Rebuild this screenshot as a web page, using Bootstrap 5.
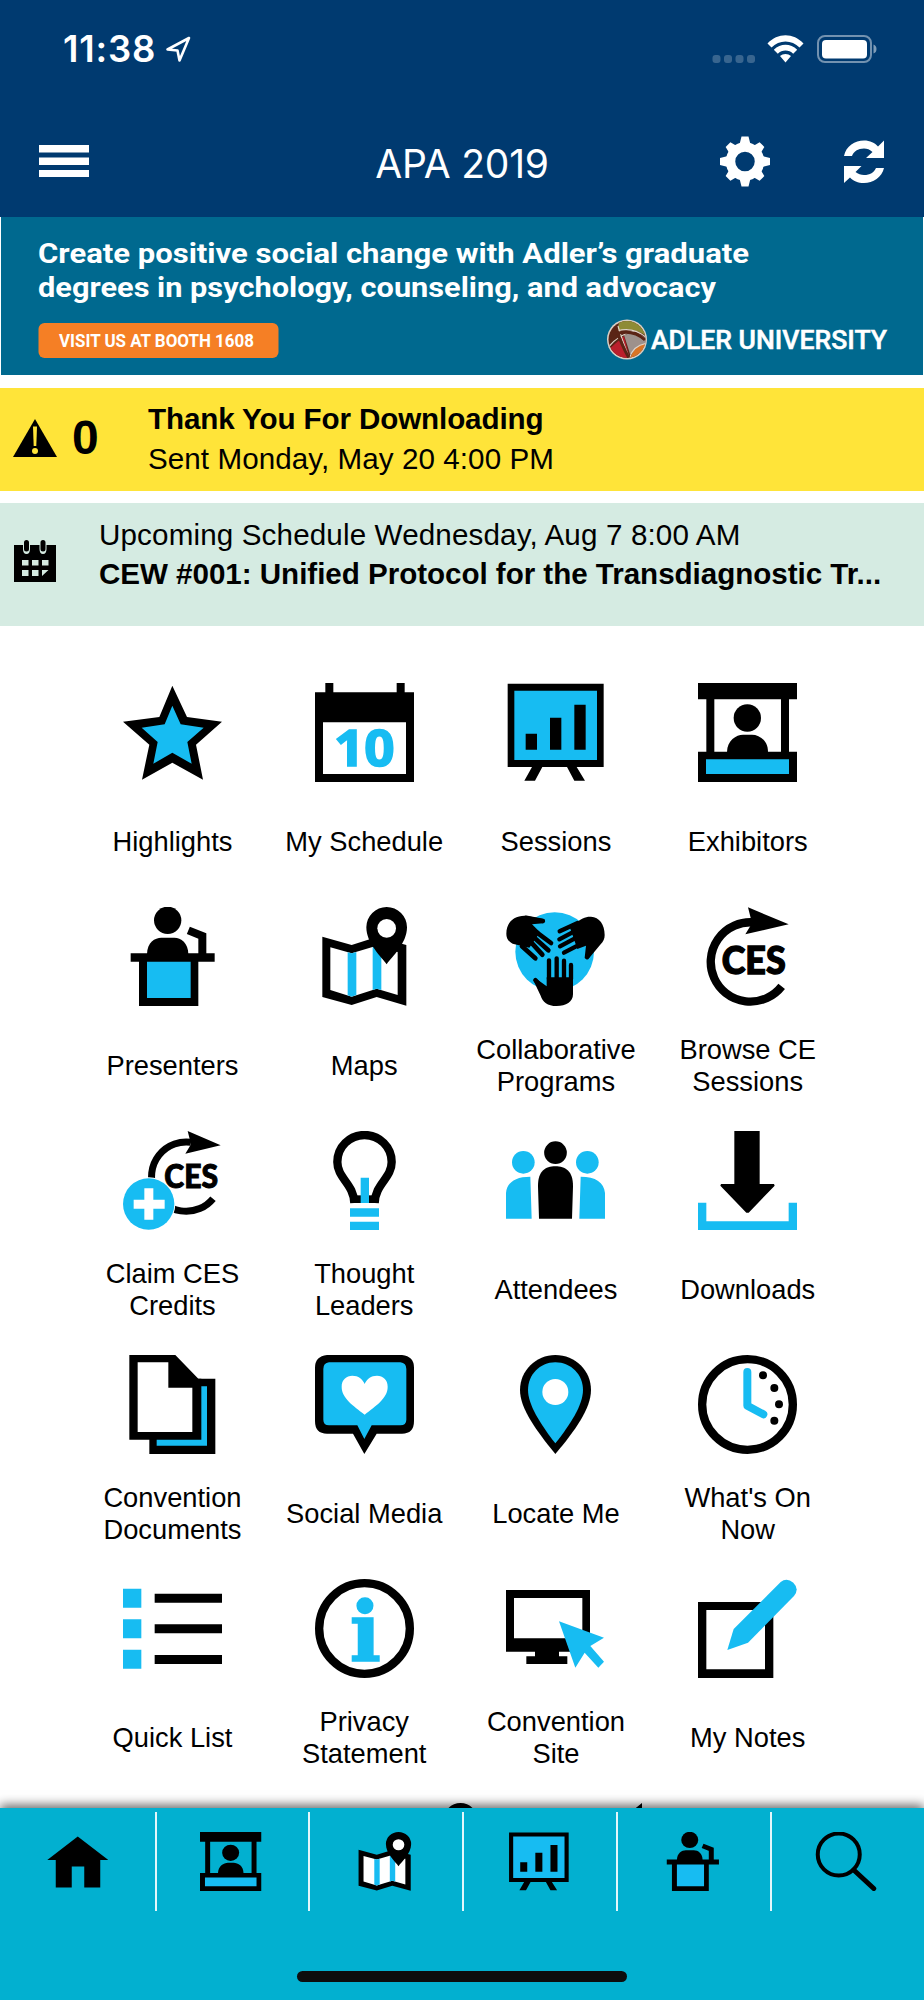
<!DOCTYPE html>
<html lang="en">
<head>
  <meta charset="UTF-8" />
  <meta name="viewport" content="width=device-width, initial-scale=1.0" />
  <title>APA 2019</title>
  <link href="https://cdn.jsdelivr.net/npm/bootstrap@5.3.2/dist/css/bootstrap.min.css" rel="stylesheet" />
  <style>
    body {
      font-family: "Liberation Sans", Arial, sans-serif;
      color: #000;
      background: #fff;
    }

    .app-screen {
      width: 924px;
      height: 2000px;
    }

    /* Status bar and title bar */
    .app-header {
      height: 217px;
      background: #003a70;
      color: #fff;
      font-family: Inter, sans-serif;
    }

    .status-bar {
      height: 98px;
      padding: 0 47px 0 63px;
    }

    .status-time {
      font-size: 36.5px;
      font-weight: 600;
      letter-spacing: 0.8px;
      line-height: 40px;
    }

    .title-bar {
      height: 119px;
      display: grid;
      grid-template-columns: 1fr auto 1fr;
      padding: 0 39px 0 39px;
    }

    .menu-icon {
      margin-top: 47px;
    }

    .title-text {
      margin-top: 42px;
      font-size: 39px;
      font-weight: 400;
      line-height: 48px;
      letter-spacing: -0.2px;
    }

    .title-actions {
      gap: 73px;
    }

    .ad-banner {
      height: 158px;
      margin: 0 1px;
      background: #00698f;
    }

    /* Notice strips */
    .notice {
      font-size: 29.6px;
      line-height: 39.5px;
    }

    .notice-alert {
      height: 103px;
      margin-top: 12.7px;
      padding: 11.5px 13px 0;
      background: #ffe439;
    }

    .notice-alert .fw-bold {
      letter-spacing: -0.12px;
    }

    .notice-alert .alert-info-side {
      width: 135px;
      height: 78px;
    }

    .alert-count {
      margin-left: 15px;
      font-size: 48px;
      font-weight: 700;
      line-height: 48px;
    }

    .sent-line {
      letter-spacing: 0.07px;
    }

    .notice-next {
      height: 123px;
      margin-top: 12.6px;
      padding: 11.5px 14px 0;
      background: #d5ebe2;
    }

    .notice-next .next-time {
      letter-spacing: 0.14px;
    }

    .notice-next .fw-bold {
      letter-spacing: -0.04px;
    }

    .notice-next svg {
      margin-top: 25px;
      margin-right: 43px;
    }

    /* Icon grid */
    .tile-area {
      height: 1181.4px;
      padding: 56.6px 80.4px 0 76.6px;
    }

    .tile {
      width: 25%;
      height: 224.1px;
    }

    .tile svg {
      width: 99px;
      height: 99px;
    }

    .tile-label {
      height: 64px;
      margin-top: 28.2px;
      padding: 0 8px;
      font-size: 27.3px;
      line-height: 32px;
    }

    /* Bottom tabs */
    .tab-area {
      height: 192.3px;
      background: #02b0d0;
      box-shadow: 0 -3px 10px rgba(0, 0, 0, 0.6);
    }

    .tab-row {
      height: 103px;
      padding-top: 4px;
      display: grid;
      grid-template-columns: 156.5px repeat(4, 153.9px) 1fr;
    }

    .tab-link {
      padding-top: 20px;
      padding-right: 3px;
      border-right: 2px solid #e3f7fb;
    }

    .tab-link:first-child {
      padding-right: 0;
    }

    .tab-link:last-child {
      padding-right: 4px;
      border-right: 0;
    }

    .tab-link svg {
      width: 61.500px;
      height: 59px;
    }

    .home-bar {
      width: 330px;
      height: 11px;
      margin-top: 60px;
      border-radius: 6px;
      background: #0d0d0d;
    }
  </style>
</head>
<body>
  <!-- Icon shapes, shared by the grid and the tabs -->
  <svg class="d-none">
    <symbol id="star" viewBox="0 0 297 297">
      <path d="M148 8 192 102 297 116 219 185 240 290 148 239 57 290 79 185 0 116 109 102Z" />
      <path d="M148 68 173 124 242 134 193 177 206 242 148 209 91 242 104 177 56 134 125 124Z" fill="#17bcf2" />
    </symbol>
    <symbol id="calendar" viewBox="0 0 297 297">
      <path d="M31 0H55V28H245V0H269V28H297V297H0V28H31Z" />
      <path d="M24 118H273V273H24Z" fill="#fff" />
      <text x="57" y="249" font-family="Noto Sans, sans-serif" font-weight="700" font-size="148" fill="#17bcf2" stroke="#17bcf2" stroke-width="5" textLength="182" lengthAdjust="spacingAndGlyphs">10</text>
    </symbol>
    <symbol id="sessions" viewBox="0 0 297 297" preserveAspectRatio="none">
      <path d="M5 2H293V252H212L237 293H205L183 252H109L87 293H55L78 252H5Z" />
      <path d="M25 23H273V231H25Z" fill="#17bcf2" />
      <path d="M59 152H93V200H59ZM132 104H166V200H132ZM205 65H239V200H205Z" />
    </symbol>
    <symbol id="exhibitors" viewBox="0 0 297 297" preserveAspectRatio="none">
      <path d="M0 0H297V49H273V206H297V297H0V206H25V49H0ZM49 49V206H249V49Z" fill-rule="evenodd" />
      <path d="M24 229H273V273H24Z" fill="#17bcf2" />
      <circle cx="148" cy="105" r="41" />
      <path d="M87 207C87 172 115 155 135 155H162C184 155 210 172 210 207Z" />
    </symbol>
    <symbol id="presenter" viewBox="0 0 297 297" preserveAspectRatio="none">
      <circle cx="134" cy="40" r="41" />
      <path d="M72 142C72 106 96 92 115 92H154C174 92 196 108 196 142Z" />
      <path d="M23 139H275V164H226V297H48V164H23Z" />
      <path d="M72 164H203V273H72Z" fill="#17bcf2" />
      <path d="M196 70 238 87V142" fill="none" stroke="#000" stroke-width="24" />
    </symbol>
    <symbol id="map" viewBox="0 0 297 297" preserveAspectRatio="none">
      <path d="M22 89 110 114 185 90 274 114V296L185 270 110 294 22 270Z" />
      <path d="M46 121 110 139 185 116 248 135V264L185 245 110 269 46 249Z" fill="#fff" />
      <path d="M98 136 110 139 124 135V264L110 269 98 265ZM173 120 185 116 199 120V249L185 245 173 249Z" fill="#17bcf2" />
      <path d="M215 172C200 150 154 110 154 61A61 61 0 0 1 276 61C276 110 230 150 215 172Z" />
      <circle cx="215" cy="64" r="28" fill="#fff" />
    </symbol>
    <symbol id="hands" viewBox="0 0 297 297">
      <circle cx="146" cy="134" r="118" fill="#17bcf2" />
      <path d="M122 211H201V262C201 285 180 297 152 297C124 297 110 284 104 266L82 220 95 218 122 238ZM1 80C1 46 24 25 58 26L112 36V49L78 52 102 76 70 122 20 110C5 102 1 92 1 80ZM296 84C296 52 280 30 255 29C238 28 226 36 205 50L192 62 214 126 240 116 236 152 249 154 284 112C292 104 296 95 296 84Z" />
      <g fill="none" stroke="#000" stroke-width="13" stroke-linecap="round">
        <path d="M129 216V160M152 216V154M174 216V161M195 216V174M88 219 112 246M60 32 111 42" />
        <path d="M92 76 135 108M80 88 127 130M68 98 109 143M48 118 88 154" stroke-width="14" />
        <path d="M161 73 215 48M160 97 215 68M162 118 218 88M174 137 222 112M243 151 255 122" />
      </g>
    </symbol>
    <symbol id="ces" viewBox="0 0 297 297">
      <path d="M165 46A119 119 0 1 0 251 238" fill="none" stroke="#000" stroke-width="25" />
      <path d="M150 1 272 52 142 82 162 49Z" />
      <text x="71" y="202" font-family="Lato" font-weight="900" font-size="113" textLength="192" lengthAdjust="spacingAndGlyphs" stroke="#000" stroke-width="4">CES</text>
    </symbol>
    <symbol id="claim" viewBox="0 0 297 297">
      <path d="M204 34A104 104 0 1 0 270 203" fill="none" stroke="#000" stroke-width="21" />
      <path d="M194 0 293 43 187 68 204 40Z" />
      <text x="124" y="171" font-family="Lato" font-weight="900" font-size="95" textLength="161" lengthAdjust="spacingAndGlyphs" stroke="#000" stroke-width="3">CES</text>
      <circle cx="77" cy="219" r="80" fill="#fff" />
      <circle cx="77" cy="219" r="77" fill="#17bcf2" />
      <path d="M64 172H91V206H125V233H91V266H64V233H32V206H64Z" fill="#fff" />
    </symbol>
    <symbol id="bulb" viewBox="0 0 297 297">
      <path d="M118 216C116 158 67 142 67 93A81.5 81 0 0 1 230 93C230 142 181 158 179 216" fill="none" stroke="#000" stroke-width="25" />
      <path d="M115 193H182V216H115Z" />
      <path d="M137 140H162V216H137ZM105 232H192V257H105ZM105 272H192V297H105Z" fill="#17bcf2" />
    </symbol>
    <symbol id="attendees" viewBox="0 0 297 297">
      <circle cx="148.500" cy="65" r="34" />
      <path d="M99 263 96 165C96 120 118 106 148 106S201 120 201 165L198 263Z" />
      <g fill="#17bcf2">
        <circle cx="52" cy="94" r="34" />
        <circle cx="244" cy="94" r="34" />
        <path d="M0 263V186C3 154 28 137 73 137L77 263ZM297 263V186C294 154 269 137 224 137L220 263Z" />
      </g>
    </symbol>
    <symbol id="download" viewBox="0 0 297 297">
      <path d="M109 0H185V159H228L230 164 152 245H145L67 164 69 159H109Z" />
      <path d="M0 215H25V271H272V215H297V297H0Z" fill="#17bcf2" />
    </symbol>
    <symbol id="docs" viewBox="0 0 297 297">
      <path d="M79 71H277V297H79Z" />
      <path d="M101 94H252V272H101Z" fill="#17bcf2" />
      <path d="M19 0H157L226 71H235V254H19Z" />
      <path d="M44 22H136V98H208V231H44Z" fill="#fff" />
    </symbol>
    <symbol id="social" viewBox="0 0 297 297">
      <path d="M36 0H261Q297 4 297 38V198Q297 236 261 236H185L148 297 114 236H36Q0 236 0 198V38Q0 4 36 0Z" />
      <path d="M42 22H256Q274 24 274 42V194Q274 211 256 211H170L148 252 127 211H42Q25 211 25 194V42Q25 24 42 22Z" fill="#17bcf2" />
      <path d="M149 179C115 152 80 130 80 95C80 74 94 62 112 62C130 62 143 72 149 87C155 72 168 62 186 62C204 62 218 74 218 95C218 130 183 152 149 179Z" fill="#fff" />
    </symbol>
    <symbol id="locate" viewBox="0 0 297 297">
      <path d="M148 0C208 0 255 47 255 105C255 160 208 226 148 297C90 226 42 160 42 105C42 47 90 0 148 0Z" />
      <path d="M148 22C196 22 231 60 231 105C231 150 192 210 148 265C105 210 66 150 66 105C66 60 101 22 148 22Z" fill="#17bcf2" />
      <circle cx="148" cy="111" r="39" fill="#fff" />
    </symbol>
    <symbol id="clock" viewBox="0 0 297 297">
      <circle cx="148.500" cy="148.500" r="136" fill="none" stroke="#000" stroke-width="25" />
      <path d="M148 51V152L196 178" fill="none" stroke="#17bcf2" stroke-width="24" stroke-linecap="round" stroke-linejoin="round" />
      <circle cx="195" cy="61" r="12" /><circle cx="229" cy="99" r="12" />
      <circle cx="243" cy="148" r="12" /><circle cx="229" cy="197" r="12" />
    </symbol>
    <symbol id="list" viewBox="0 0 297 297">
      <path d="M0 29H55V86H0ZM0 121H55V178H0ZM0 212H55V269H0Z" fill="#17bcf2" />
      <path d="M95 44H297V71H95ZM95 136H297V163H95ZM95 228H297V255H95Z" />
    </symbol>
    <symbol id="info" viewBox="0 0 297 297">
      <circle cx="148.500" cy="148.500" r="136" fill="none" stroke="#000" stroke-width="25" />
      <text x="151" y="245" text-anchor="middle" font-family="DejaVu Serif" font-weight="700" font-size="246" fill="#17bcf2" stroke="#17bcf2" stroke-width="5">i</text>
    </symbol>
    <symbol id="site" viewBox="0 0 297 297">
      <path d="M0 33H252V218H159V232H184V255H61V232H87V218H0Z" />
      <path d="M24 57H229V178H24Z" fill="#fff" />
      <path d="M159 127 294 176 253 201 294 248 277 266 236 221 208 266Z" fill="#17bcf2" />
    </symbol>
    <symbol id="notes" viewBox="0 0 297 297">
      <path d="M0 69H226V297H0ZM25 93V271H201V93Z" fill-rule="evenodd" />
      <path d="M88 213 107 150 248 9Q266-6 286 11 305 30 288 51L150 191Z" fill="#17bcf2" />
    </symbol>
  </svg>

  <div class="app-screen d-flex flex-column overflow-hidden">
    <header class="app-header">
      <div class="status-bar d-flex align-items-center justify-content-between">
        <div class="d-flex align-items-center gap-2">
          <span class="status-time">11:38</span>
          <svg width="28" height="28" viewBox="0 0 28 28" fill="none" stroke="#fff" stroke-width="2.600" stroke-linejoin="round">
            <path d="M25 3 3.500 14.500 13.500 15.500 15.500 25.500Z" />
          </svg>
        </div>
        <svg width="165" height="30" viewBox="0 0 165 30" fill="#fff" overflow="visible">
          <g opacity="0.220">
            <rect x="0.500" y="21" width="8" height="8" rx="3" />
            <rect x="12" y="21" width="8" height="8" rx="3" />
            <rect x="23.500" y="21" width="8" height="8" rx="3" />
            <rect x="35" y="21" width="8" height="8" rx="3" />
          </g>
          <path d="M55.500 9.500C65.500-1.500 81.500-1.500 91.500 9.500L87.500 13.500C80 5.500 67 5.500 59.500 13.500ZM61.800 15.800C68.500 9 78.500 9 85.200 15.800L81.200 19.800C77 15.500 70 15.500 65.800 19.800ZM68 22C71 19.300 76 19.300 79 22L73.500 28.500Z" />
          <rect x="106" y="2" width="53" height="26" rx="7" fill="none" stroke="#fff" stroke-width="2" opacity="0.450" />
          <rect x="110" y="6" width="45" height="18.500" rx="4" />
          <path d="M161.500 10.500Q164.500 11.500 164.500 15T161.500 19.500Z" opacity="0.500" />
        </svg>
      </div>
      <nav class="title-bar">
        <svg class="menu-icon" width="50" height="34" viewBox="0 0 50 34" fill="#fff">
          <path d="M0 0H50V7.500H0ZM0 12.500H50V20H0ZM0 25H50V32H0Z" />
        </svg>
        <span class="title-text">APA 2019</span>
        <div class="title-actions d-flex justify-content-end">
          <svg class="mt-4" width="50" height="80" viewBox="-25 -40 50 80" fill="#fff">
            <g transform="translate(0 -0.500)">
              <circle r="14.500" fill="none" stroke="#fff" stroke-width="9.500" />
              <g id="teeth">
                <path d="M-5.500-17-3.500-25H3.500L5.500-17ZM-5.500 17-3.500 25H3.500L5.500 17Z" />
                <path d="M-17-5.500-25-3.500V3.500L-17 5.500ZM17-5.500 25-3.500V3.500L17 5.500Z" />
              </g>
              <use href="#teeth" transform="rotate(45) scale(0.960)" />
            </g>
          </svg>
          <svg class="mt-4" width="42" height="80" viewBox="0 0 42 80" fill="#fff">
            <path d="M1 34C3 24 12 18.500 21 18.500C27 18.500 32 21 35 24.500L41 18.500V36H23L29.500 30C27 27.500 24 26.500 21 26.500C15 26.500 10.500 29.500 9 34Z" />
            <path d="M41 46C39 55 30 61 21 61C15 61 10 59 7 55.500L1 61V44H18.500L12.500 50C15 52 18 53 21 53C27 53 31 50.500 33 46Z" />
          </svg>
        </div>
      </nav>
    </header>

    <section class="ad-banner">
      <svg class="d-block" width="922" height="158" viewBox="1 217 922 158" fill="#fff" font-family="Roboto, sans-serif">
        <g font-size="28.500" font-weight="700">
          <text x="38" y="262.500" textLength="711" lengthAdjust="spacingAndGlyphs">Create positive social change with Adler’s graduate</text>
          <text x="38" y="297" textLength="678" lengthAdjust="spacingAndGlyphs">degrees in psychology, counseling, and advocacy</text>
        </g>
        <rect x="38.500" y="323" width="240" height="35" rx="6" fill="#f57f25" />
        <text x="59" y="346.500" font-size="18.200" font-weight="700" textLength="195" lengthAdjust="spacingAndGlyphs">VISIT US AT BOOTH 1608</text>
        <clipPath id="globe"><circle cx="627" cy="339.500" r="18.500" /></clipPath>
        <circle cx="627" cy="339.500" r="20" fill="#d9cfc4" />
        <g clip-path="url(#globe)">
          <path d="M607 319H648V360H607Z" fill="#5a2416" />
          <path d="M620 319H648V337Q634 326 617 331Z" fill="#8e8b35" />
          <path d="M608 350 624 336 630 360H612Z" fill="#bb1f2c" />
          <path d="M624 335Q636 330 648 340V352L630 354Z" fill="#9d918c" />
          <path d="M648 343Q634 344 629 361H648Z" fill="#d97526" />
          <path d="M606 350Q617 335 634 331M618 326Q622 340 630 360M629 360Q632 345 648 343M617 331Q634 326 648 339" fill="none" stroke="#ddd3c8" stroke-width="1.200" />
          <path d="M619 333Q634 330 645 340M616 328Q622 346 629 358" fill="none" stroke="#5a2416" stroke-width="3" />
        </g>
        <text x="651" y="348.500" font-size="26" font-weight="500" stroke="#fff" stroke-width="0.500" textLength="236" lengthAdjust="spacingAndGlyphs">ADLER UNIVERSITY</text>
      </svg>
    </section>

    <section class="notice notice-alert d-flex">
      <div class="alert-info-side d-flex align-items-center">
        <svg width="44" height="38" viewBox="0 0 44 38">
          <path d="M22 0 44 38H0Z" />
          <path d="M20 7.500H24L23.300 27H20.700Z" fill="#ffe439" />
          <circle cx="22" cy="32" r="3" fill="#ffe439" />
        </svg>
        <span class="alert-count">0</span>
      </div>
      <div>
        <div class="fw-bold">Thank You For Downloading</div>
        <div class="sent-line">Sent Monday, May 20 4:00 PM</div>
      </div>
    </section>

    <section class="notice notice-next d-flex text-nowrap">
      <svg width="42" height="43" viewBox="0 0 42 43">
        <path d="M0 5H42V42H0Z" />
        <path d="M9 3V9Q9 14 12.500 14T16 9V3ZM25.500 3V9Q25.500 14 29 14T32.500 9V3Z" fill="#d5ebe2" />
        <path d="M12.500 2.500V9M29 2.500V9" stroke="#000" stroke-width="5" stroke-linecap="round" />
        <path d="M8 20H14.500V25.500H8ZM18 20H24.500V25.500H18ZM28 20H34.500V25.500H28ZM8 30H14.500V36H8ZM18 30H24.500V36H18ZM28 30H34.500L28 36Z" fill="#d5ebe2" />
      </svg>
      <div>
        <div class="next-time">Upcoming Schedule Wednesday, Aug 7 8:00 AM</div>
        <div class="fw-bold">CEW #001: Unified Protocol for the Transdiagnostic Tr...</div>
      </div>
    </section>

    <main class="tile-area d-flex flex-wrap justify-content-center align-content-start overflow-hidden flex-shrink-0">
      <div class="tile d-flex flex-column align-items-center">
        <svg><use href="#star" /></svg>
        <div class="tile-label d-flex align-items-center text-center">Highlights</div>
      </div>
      <div class="tile d-flex flex-column align-items-center">
        <svg><use href="#calendar" /></svg>
        <div class="tile-label d-flex align-items-center text-center">My Schedule</div>
      </div>
      <div class="tile d-flex flex-column align-items-center">
        <svg><use href="#sessions" /></svg>
        <div class="tile-label d-flex align-items-center text-center">Sessions</div>
      </div>
      <div class="tile d-flex flex-column align-items-center">
        <svg><use href="#exhibitors" /></svg>
        <div class="tile-label d-flex align-items-center text-center">Exhibitors</div>
      </div>

      <div class="tile d-flex flex-column align-items-center">
        <svg><use href="#presenter" /></svg>
        <div class="tile-label d-flex align-items-center text-center">Presenters</div>
      </div>
      <div class="tile d-flex flex-column align-items-center">
        <svg><use href="#map" /></svg>
        <div class="tile-label d-flex align-items-center text-center">Maps</div>
      </div>
      <div class="tile d-flex flex-column align-items-center">
        <svg><use href="#hands" /></svg>
        <div class="tile-label d-flex align-items-center text-center">Collaborative<br />Programs</div>
      </div>
      <div class="tile d-flex flex-column align-items-center">
        <svg><use href="#ces" /></svg>
        <div class="tile-label d-flex align-items-center text-center">Browse CE<br />Sessions</div>
      </div>

      <div class="tile d-flex flex-column align-items-center">
        <svg><use href="#claim" /></svg>
        <div class="tile-label d-flex align-items-center text-center">Claim CES<br />Credits</div>
      </div>
      <div class="tile d-flex flex-column align-items-center">
        <svg><use href="#bulb" /></svg>
        <div class="tile-label d-flex align-items-center text-center">Thought<br />Leaders</div>
      </div>
      <div class="tile d-flex flex-column align-items-center">
        <svg><use href="#attendees" /></svg>
        <div class="tile-label d-flex align-items-center text-center">Attendees</div>
      </div>
      <div class="tile d-flex flex-column align-items-center">
        <svg><use href="#download" /></svg>
        <div class="tile-label d-flex align-items-center text-center">Downloads</div>
      </div>

      <div class="tile d-flex flex-column align-items-center">
        <svg><use href="#docs" /></svg>
        <div class="tile-label d-flex align-items-center text-center">Convention<br />Documents</div>
      </div>
      <div class="tile d-flex flex-column align-items-center">
        <svg><use href="#social" /></svg>
        <div class="tile-label d-flex align-items-center text-center">Social Media</div>
      </div>
      <div class="tile d-flex flex-column align-items-center">
        <svg><use href="#locate" /></svg>
        <div class="tile-label d-flex align-items-center text-center">Locate Me</div>
      </div>
      <div class="tile d-flex flex-column align-items-center">
        <svg><use href="#clock" /></svg>
        <div class="tile-label d-flex align-items-center text-center">What's On<br />Now</div>
      </div>

      <div class="tile d-flex flex-column align-items-center">
        <svg><use href="#list" /></svg>
        <div class="tile-label d-flex align-items-center text-center">Quick List</div>
      </div>
      <div class="tile d-flex flex-column align-items-center">
        <svg><use href="#info" /></svg>
        <div class="tile-label d-flex align-items-center text-center">Privacy<br />Statement</div>
      </div>
      <div class="tile d-flex flex-column align-items-center">
        <svg><use href="#site" /></svg>
        <div class="tile-label d-flex align-items-center text-center">Convention<br />Site</div>
      </div>
      <div class="tile d-flex flex-column align-items-center">
        <svg><use href="#notes" /></svg>
        <div class="tile-label d-flex align-items-center text-center">My Notes</div>
      </div>

      <!-- Last row, mostly under the tabs -->
      <div class="tile"></div>
      <div class="tile d-flex flex-column align-items-center">
        <svg viewBox="0 0 99 99"><circle cx="49.500" cy="17" r="17" /></svg>
      </div>
      <div class="tile d-flex flex-column align-items-center">
        <svg viewBox="0 0 99 99"><path d="M40 0 30 8H24V99H48V8H40Z" /></svg>
      </div>
    </main>

    <footer class="tab-area flex-shrink-0">
      <nav class="tab-row">
        <a class="tab-link text-center" href="#">
          <svg viewBox="0 0 61 59"><path d="M30.500 4.500 61 28H53V55.500H37V34.500H24.500V55.500H8.500V28H0Z" /></svg>
        </a>
        <a class="tab-link text-center" href="#"><svg><use href="#exhibitors" /></svg></a>
        <a class="tab-link text-center" href="#"><svg><use href="#map" /></svg></a>
        <a class="tab-link text-center" href="#"><svg><use href="#sessions" /></svg></a>
        <a class="tab-link text-center" href="#"><svg><use href="#presenter" /></svg></a>
        <a class="tab-link text-center" href="#">
          <svg viewBox="0 0 61 59" fill="none" stroke="#000" stroke-linecap="round">
            <circle cx="23.500" cy="22.500" r="21" stroke-width="4" />
            <path d="M38.500 38 58.500 56.500" stroke-width="5" />
          </svg>
        </a>
      </nav>
      <div class="home-bar mx-auto"></div>
    </footer>
  </div>

  <script src="https://cdn.jsdelivr.net/npm/bootstrap@5.3.2/dist/js/bootstrap.bundle.min.js"></script>
</body>
</html>
